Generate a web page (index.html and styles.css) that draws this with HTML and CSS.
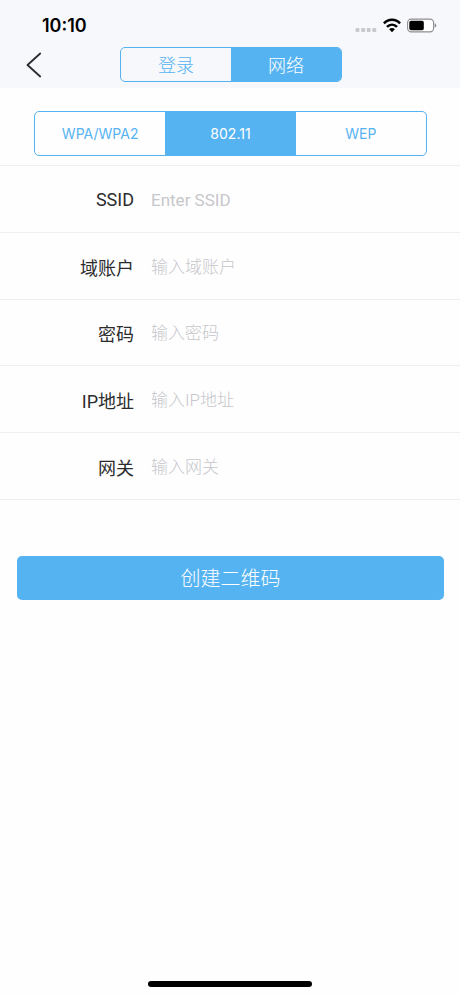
FILE: index.html
```
<!DOCTYPE html>
<html lang="zh-CN">
<head>
<meta charset="utf-8">
<meta name="viewport" content="width=device-width, initial-scale=1">
<title>网络</title>
<link rel="stylesheet" href="styles.css">
</head>
<body>
<header class="top">
  <div class="status">
    <time class="clock">10:10</time>
    <div class="indicators">
      <svg class="signal" width="22" height="18" viewBox="0 0 22 18" aria-hidden="true" fill="#c9c9cd">
        <rect x=".5" y="11" width="4" height="4" rx="1"/><rect x="6.100" y="11" width="4" height="4" rx="1"/><rect x="11.700" y="11" width="4" height="4" rx="1"/><rect x="17.300" y="11" width="4" height="4" rx="1"/>
      </svg>
      <svg width="18" height="18" viewBox="0 0 18 18" aria-hidden="true" fill="none" stroke="#000" stroke-width="2.700">
        <path d="M.9 6.400C5.500 1.500 12.500 1.500 17.100 6.400"/>
        <path d="M4 9.900C6.900 7 11.100 7 14 9.900"/>
        <path d="M6.100 12.200C7.700 10.500 10.300 10.500 11.900 12.200L9 15.200Z" fill="#000" stroke="none"/>
      </svg>
      <svg width="30" height="18" viewBox="0 0 30 18" aria-hidden="true">
        <rect x=".6" y="2.100" width="26" height="12.800" rx="3.600" fill="#fff" stroke="#8e8e90" stroke-width="1.100"/>
        <rect x="2.300" y="3.800" width="14.500" height="9.400" rx="1.800"/>
        <path d="M27.700 6.300C29.800 7 29.800 10 27.700 10.700Z" fill="#8e8e90"/>
      </svg>
    </div>
  </div>
  <nav class="bar">
    <button class="back" type="button" aria-label="返回">
      <svg width="16" height="26" viewBox="0 0 16 26" fill="none" stroke="#2b2b2f" stroke-width="1.800" stroke-linecap="round" stroke-linejoin="round"><path d="M14.200 1.500L1.500 13L14.200 24.500"/></svg>
    </button>
    <div class="segments page-tabs">
      <button class="segment" type="button">登录</button>
      <button class="segment selected" type="button">网络</button>
    </div>
  </nav>
</header>
<main>
  <div class="segments security">
    <button class="segment" type="button">WPA/WPA2</button>
    <button class="segment selected" type="button">802.11</button>
    <button class="segment" type="button">WEP</button>
  </div>
  <form>
    <div class="fields">
      <div class="field"><label for="ssid">SSID</label><input id="ssid" type="text" placeholder="Enter SSID"></div>
      <div class="field"><label for="account">域账户</label><input id="account" type="text" placeholder="输入域账户"></div>
      <div class="field"><label for="password">密码</label><input id="password" type="password" placeholder="输入密码"></div>
      <div class="field"><label for="ip">IP地址</label><input id="ip" type="text" placeholder="输入IP地址"></div>
      <div class="field"><label for="gateway">网关</label><input id="gateway" type="text" placeholder="输入网关"></div>
    </div>
    <button class="create" type="button">创建二维码</button>
  </form>
</main>
<div class="home"></div>
</body>
</html>
```
FILE: styles.css
```
* {
  box-sizing: border-box;
}

body {
  margin: 0;
  min-height: 100vh;
  display: flex;
  flex-direction: column;
  background: #fefefe;
  color: #2c2c2e;
  font-family: Inter, "Noto Sans CJK SC", sans-serif;
}

button,
input {
  margin: 0;
  padding: 0;
  border: 0;
  background: none;
  font: inherit;
  color: inherit;
}

svg {
  display: block;
}

.top {
  background: #f7f8fc;
  padding-bottom: 6px;
}

.status {
  display: flex;
  align-items: center;
  justify-content: space-between;
  height: 35px;
  margin-bottom: 12px;
  padding: 16px 23px 0 42px;
}

.clock {
  color: #000;
  font-size: 18px;
  font-weight: 600;
  line-height: 20px;
}

.indicators {
  display: flex;
  align-items: center;
  gap: 6px;
}

.bar {
  display: grid;
  grid-template-columns: 1fr 222px 1fr;
  align-items: center;
  padding-left: 2px;
}

.back {
  justify-self: start;
  padding-left: 24px;
}

.page-tabs {
  grid-column: 2;
  height: 35px;
  font-size: 18px;
}

.page-tabs .segment {
  padding-bottom: 2px;
  font-weight: 300;
}

.segments {
  display: grid;
  grid-auto-flow: column;
  grid-auto-columns: 1fr;
  overflow: hidden;
  border: 1px solid #56b3f1;
  border-radius: 5px;
}

.segment {
  color: #56b3f1;
}

.selected {
  background: #56b3f1;
  color: #fff;
}

.security {
  height: 45px;
  margin: 23px 33px 9px 34px;
  font-size: 14px;
}

.fields {
  display: grid;
  grid-template-rows: repeat(5, 1fr);
  min-height: 335px;
  border-top: 1px solid #efeff1;
}

.field {
  display: grid;
  grid-template-columns: 134px 1fr;
  gap: 17px;
  align-items: center;
  padding-top: 2px;
  border-bottom: 1px solid #efeff1;
  font-family: Roboto, "Noto Sans CJK SC", sans-serif;
}

.field label {
  text-align: right;
  font-size: 18px;
}

.field input {
  min-width: 0;
  height: 44px;
  outline: 0;
  font-size: 17px;
}

.field input::placeholder {
  color: #c7c7cb;
  font-weight: 300;
}

.field #ssid::placeholder {
  font-weight: 400;
}

.create {
  display: block;
  width: calc(100% - 33px);
  height: 44px;
  margin: 56px 16px 0 17px;
  padding-bottom: 2px;
  border-radius: 5px;
  background: #56b3f1;
  color: #fff;
  font-size: 20px;
  font-weight: 300;
}

.home {
  width: 164px;
  height: 6px;
  margin: auto auto 9px;
  border-radius: 3px;
  background: #000;
}
```
